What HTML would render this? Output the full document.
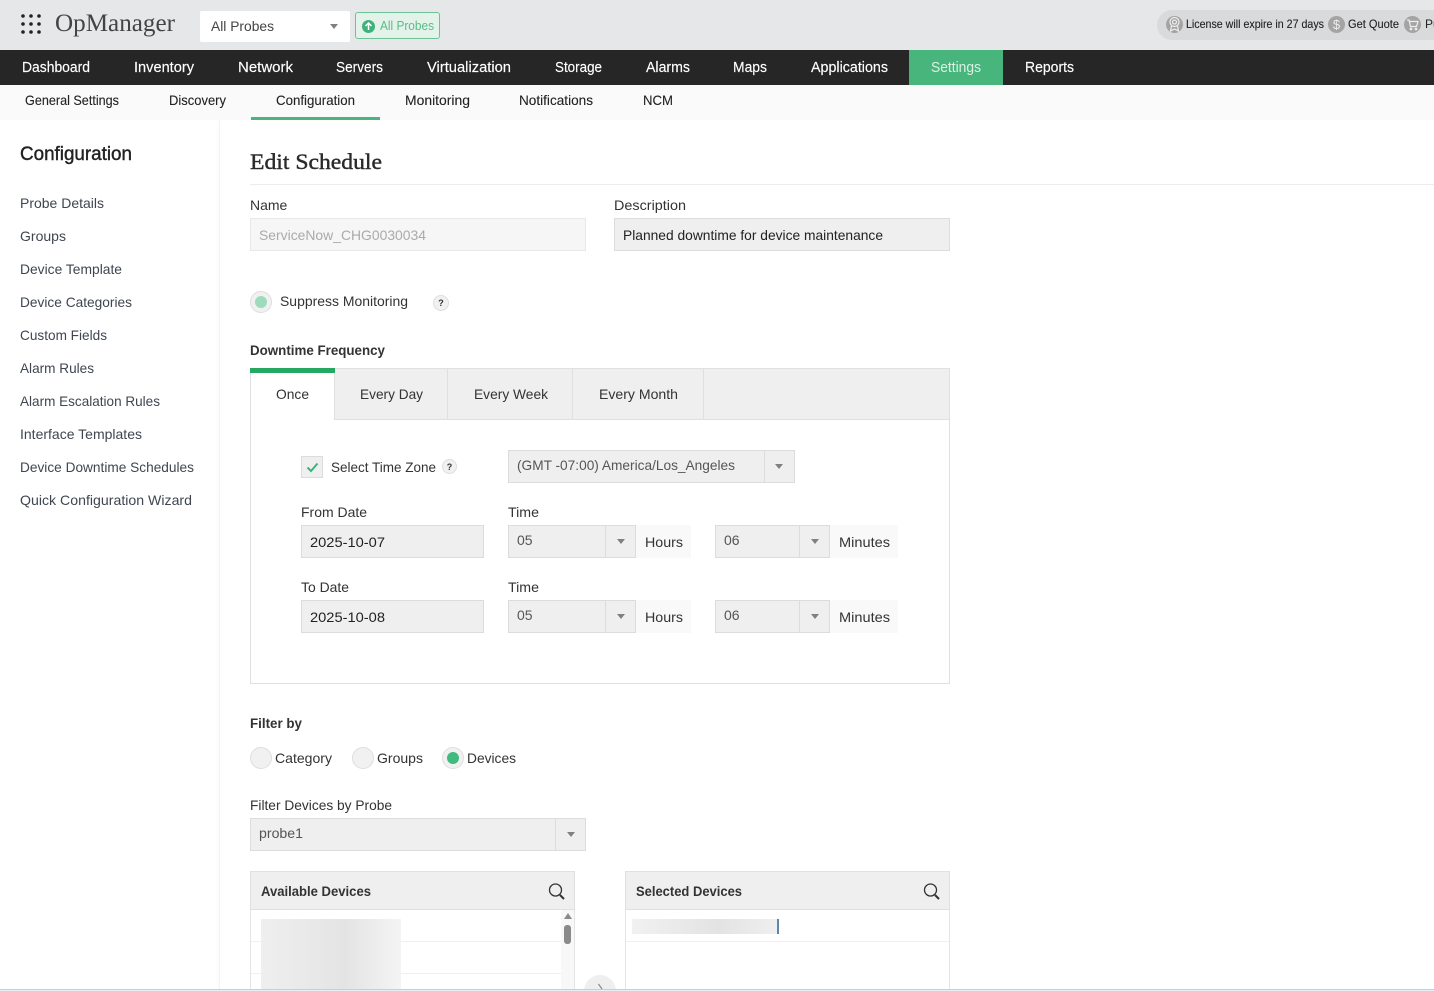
<!DOCTYPE html>
<html lang="en"><head><meta charset="utf-8"><title>OpManager - Edit Schedule</title>
<style>
html,body{margin:0;padding:0;background:#fff;width:1434px;height:991px;overflow:hidden}
#p{position:relative;width:1434px;height:991px;overflow:hidden;background:#fff}
.b{position:absolute;box-sizing:border-box}
.f{background:#efefef;border:1px solid #dcdcdc}
.sep{position:absolute;top:0;bottom:0;width:1px;background:#dcdcdc}
.ar{position:absolute;width:0;height:0;border-left:4px solid transparent;border-right:4px solid transparent;border-top:5px solid #808080}
.u{background:#f9f9f9}
.r{border-radius:50%;background:#f1f1f1;border:1px solid #dedede}
svg.o{position:absolute;left:0;top:0}
text{font-family:"Liberation Sans",sans-serif;font-size:14px;fill:#333}
.n{fill:#fff;font-size:14.5px;stroke:#fff;stroke-width:.15px}
.s{fill:#222;font-size:14px;stroke:#222;stroke-width:.1px}
.m{fill:#3f4650}
.h{font-weight:bold;fill:#333}
.d{fill:#555}
</style></head><body><div id="p">
<div class="b" style="left:0;top:0;width:1434px;height:50px;background:#e6e7e9"></div>
<div class="b" style="left:200px;top:11px;width:150px;height:31px;background:#fff;border-radius:2px"></div>
<div class="ar" style="left:330px;top:24px"></div>
<div class="b" style="left:355px;top:12px;width:85px;height:27px;background:#e4f3ea;border:1px solid #6cc496;border-radius:3px"></div>
<div class="b" style="left:362px;top:20px;width:13px;height:13px;border-radius:50%;background:#3fb27a"></div>
<div class="b" style="left:1157px;top:10px;width:290px;height:30px;background:#d9dadb;border-radius:15px"></div>
<div class="b" style="left:1166px;top:16px;width:17px;height:17px;border-radius:50%;background:#a4a4a4"></div>
<div class="b" style="left:1328px;top:16px;width:17px;height:17px;border-radius:50%;background:#a4a4a4"></div>
<div class="b" style="left:1404px;top:16px;width:17px;height:17px;border-radius:50%;background:#a4a4a4"></div>
<div class="b" style="left:0;top:50px;width:1434px;height:35px;background:#262626"></div>
<div class="b" style="left:909px;top:50px;width:94px;height:35px;background:#48b57c"></div>
<div class="b" style="left:0;top:85px;width:1434px;height:35px;background:#fafafa"></div>
<div class="b" style="left:251px;top:117px;width:129px;height:3px;background:#48b57c"></div>
<div class="b" style="left:219px;top:120px;width:1px;height:871px;background:#f3f3f3;box-shadow:-1px 0 3px rgba(0,0,0,.05)"></div>
<div class="b" style="left:250px;top:184px;width:1184px;height:1px;background:#ececec"></div>

<div class="b" style="left:250px;top:218px;width:336px;height:33px;background:#f6f6f6;border:1px solid #e8e8e8"></div>
<div class="b f" style="left:614px;top:218px;width:336px;height:33px"></div>
<div class="b r" style="left:250px;top:291px;width:22px;height:22px"></div>
<div class="b" style="left:255px;top:296px;width:12px;height:12px;border-radius:50%;background:#9cdcbc"></div>
<div class="b r" style="left:433px;top:295px;width:16px;height:16px"></div>

<div class="b" style="left:250px;top:368px;width:700px;height:316px;border:1px solid #e0e0e0"></div>
<div class="b" style="left:250px;top:368px;width:700px;height:52px;background:#efefef;border:1px solid #e0e0e0"></div>
<div class="b" style="left:251px;top:369px;width:84px;height:52px;background:#fff"></div>
<div class="b" style="left:250px;top:368px;width:85px;height:5px;background:#27a862"></div>
<div class="b" style="left:334px;top:373px;width:1px;height:47px;background:#e0e0e0"></div>
<div class="b" style="left:447px;top:369px;width:1px;height:50px;background:#e0e0e0"></div>
<div class="b" style="left:572px;top:369px;width:1px;height:50px;background:#e0e0e0"></div>
<div class="b" style="left:703px;top:369px;width:1px;height:50px;background:#e0e0e0"></div>

<div class="b f" style="left:301px;top:456px;width:22px;height:22px"></div>
<svg class="b" style="left:301px;top:456px" width="22" height="22"><path d="M6.500 11.500l3.500 3.500 6.500-7.500" fill="none" stroke="#3fb27a" stroke-width="2"/></svg>
<div class="b r" style="left:442px;top:459px;width:15px;height:15px"></div>
<div class="b f" style="left:508px;top:450px;width:287px;height:33px"><div class="sep" style="left:255px"></div></div>
<div class="ar" style="left:775px;top:464px"></div>

<div class="b f" style="left:301px;top:525px;width:183px;height:33px"></div>
<div class="b f" style="left:508px;top:525px;width:128px;height:33px"><div class="sep" style="left:96px"></div></div><div class="ar" style="left:617px;top:539px"></div>
<div class="b u" style="left:636px;top:525px;width:55px;height:33px"></div>
<div class="b f" style="left:715px;top:525px;width:115px;height:33px"><div class="sep" style="left:83px"></div></div><div class="ar" style="left:811px;top:539px"></div>
<div class="b u" style="left:830px;top:525px;width:68px;height:33px"></div>

<div class="b f" style="left:301px;top:600px;width:183px;height:33px"></div>
<div class="b f" style="left:508px;top:600px;width:128px;height:33px"><div class="sep" style="left:96px"></div></div><div class="ar" style="left:617px;top:614px"></div>
<div class="b u" style="left:636px;top:600px;width:55px;height:33px"></div>
<div class="b f" style="left:715px;top:600px;width:115px;height:33px"><div class="sep" style="left:83px"></div></div><div class="ar" style="left:811px;top:614px"></div>
<div class="b u" style="left:830px;top:600px;width:68px;height:33px"></div>

<div class="b r" style="left:250px;top:747px;width:22px;height:22px"></div>
<div class="b r" style="left:352px;top:747px;width:22px;height:22px"></div>
<div class="b r" style="left:442px;top:747px;width:22px;height:22px"></div>
<div class="b" style="left:447px;top:752px;width:12px;height:12px;border-radius:50%;background:#3fbb7e"></div>

<div class="b f" style="left:250px;top:818px;width:336px;height:33px"><div class="sep" style="left:304px"></div></div>
<div class="ar" style="left:567px;top:832px"></div>

<div class="b" style="left:250px;top:871px;width:325px;height:125px;border:1px solid #e4e4e4"></div>
<div class="b f" style="left:250px;top:871px;width:325px;height:39px;border-color:#e0e0e0"></div>
<div class="b" style="left:251px;top:941px;width:310px;height:1px;background:#f0f0f0"></div>
<div class="b" style="left:251px;top:973px;width:310px;height:1px;background:#f0f0f0"></div>
<div class="b" style="left:561px;top:910px;width:13px;height:80px;background:#f8f8f8"></div>
<div class="ar" style="left:563.500px;top:913px;border-top:0;border-bottom:6px solid #8a8a8a"></div>
<div class="b" style="left:564px;top:925px;width:7px;height:19px;border-radius:3px;background:#8a8a8a"></div>
<div class="b" style="left:261px;top:919px;width:140px;height:72px;background:linear-gradient(90deg,#efefef,#e4e4e4 60%,#f4f4f4)"></div>

<div class="b" style="left:625px;top:871px;width:325px;height:125px;border:1px solid #e4e4e4"></div>
<div class="b f" style="left:625px;top:871px;width:325px;height:39px;border-color:#e0e0e0"></div>
<div class="b" style="left:626px;top:941px;width:323px;height:1px;background:#f0f0f0"></div>
<div class="b" style="left:632px;top:919px;width:145px;height:15px;background:linear-gradient(90deg,#f1f1f1,#e3e3e3 60%,#efefef)"></div>
<div class="b" style="left:777px;top:919px;width:2px;height:15px;background:#5f86ad"></div>
<div class="b" style="left:584px;top:975px;width:32px;height:32px;border-radius:50%;background:#efefef"></div>
<div class="b" style="left:0;top:989px;width:1434px;height:2px;background:#e8eef6;border-top:1px solid #c5cedb"></div>

<svg class="o" width="1434" height="991">
<g fill="#222"><circle cx="23" cy="16" r="1.800"/><circle cx="31" cy="16" r="1.800"/><circle cx="39" cy="16" r="1.800"/><circle cx="23" cy="24" r="1.800"/><circle cx="31" cy="24" r="1.800"/><circle cx="39" cy="24" r="1.800"/><circle cx="23" cy="32" r="1.800"/><circle cx="31" cy="32" r="1.800"/><circle cx="39" cy="32" r="1.800"/></g>
<path d="M368.500 30v-7M365.500 26l3-3 3 3" fill="none" stroke="#fff" stroke-width="1.500"/>
<g fill="none" stroke="#eee" stroke-width="1.200"><circle cx="1174.500" cy="22" r="4.500"/><circle cx="1174.500" cy="22" r="2"/><path d="M1171.500 26l-1 5 4-2 4 2-1-5"/></g>
<g fill="none" stroke="#eee" stroke-width="1.200"><path d="M1407 20h2l1.500 6.500h6l1.500-5h-8.500"/><circle cx="1411" cy="29" r=".8"/><circle cx="1416" cy="29" r=".8"/></g>
<path d="M598.500 984l3.500 5" fill="none" stroke="#8a8a8a" stroke-width="1.200"/>
<g fill="none" stroke="#333" stroke-width="1.300"><circle cx="555.500" cy="890" r="6"/><path d="M560 895l4 4" stroke-width="2"/><circle cx="930.500" cy="890" r="6"/><path d="M935 895l4 4" stroke-width="2"/></g>
<text x="55" y="31" textLength="120" lengthAdjust="spacingAndGlyphs" style="font-family:'Liberation Serif',serif;font-size:25px;fill:#444">OpManager</text>
<text x="211" y="31" textLength="63" lengthAdjust="spacingAndGlyphs" style="fill:#444">All Probes</text>
<text x="380" y="30" textLength="54" lengthAdjust="spacingAndGlyphs" style="fill:#58bd88;font-size:13px">All Probes</text>
<text x="1186" y="28" textLength="138" lengthAdjust="spacingAndGlyphs" style="font-size:12px;fill:#222;stroke:#222;stroke-width:.12px">License will expire in 27 days</text>
<text x="1348" y="28" textLength="51" lengthAdjust="spacingAndGlyphs" style="font-size:12px;fill:#222;stroke:#222;stroke-width:.12px">Get Quote</text>
<text x="1425" y="28" style="font-size:12px;fill:#222">Purchase</text>
<text x="1336.500" y="29" text-anchor="middle" style="font-size:13px;fill:#eee">$</text>
<text class="n" x="22" y="72" textLength="68" lengthAdjust="spacingAndGlyphs">Dashboard</text>
<text class="n" x="134" y="72" textLength="60" lengthAdjust="spacingAndGlyphs">Inventory</text>
<text class="n" x="238" y="72" textLength="55" lengthAdjust="spacingAndGlyphs">Network</text>
<text class="n" x="336" y="72" textLength="47" lengthAdjust="spacingAndGlyphs">Servers</text>
<text class="n" x="427" y="72" textLength="84" lengthAdjust="spacingAndGlyphs">Virtualization</text>
<text class="n" x="555" y="72" textLength="47" lengthAdjust="spacingAndGlyphs">Storage</text>
<text class="n" x="646" y="72" textLength="44" lengthAdjust="spacingAndGlyphs">Alarms</text>
<text class="n" x="733" y="72" textLength="34" lengthAdjust="spacingAndGlyphs">Maps</text>
<text class="n" x="811" y="72" textLength="77" lengthAdjust="spacingAndGlyphs">Applications</text>
<text class="n" x="931" y="72" textLength="50" lengthAdjust="spacingAndGlyphs" style="fill:#d9f2e4;stroke:none">Settings</text>
<text class="n" x="1025" y="72" textLength="49" lengthAdjust="spacingAndGlyphs">Reports</text>
<text class="s" x="25" y="105" textLength="94" lengthAdjust="spacingAndGlyphs">General Settings</text>
<text class="s" x="169" y="105" textLength="57" lengthAdjust="spacingAndGlyphs">Discovery</text>
<text class="s" x="276" y="105" textLength="79" lengthAdjust="spacingAndGlyphs">Configuration</text>
<text class="s" x="405" y="105" textLength="65" lengthAdjust="spacingAndGlyphs">Monitoring</text>
<text class="s" x="519" y="105" textLength="74" lengthAdjust="spacingAndGlyphs">Notifications</text>
<text class="s" x="643" y="105" textLength="30" lengthAdjust="spacingAndGlyphs">NCM</text>
<text x="20" y="160" textLength="112" lengthAdjust="spacingAndGlyphs" style="font-size:19px;fill:#222;stroke:#222;stroke-width:.4px">Configuration</text>
<text class="m" x="20" y="208" textLength="84" lengthAdjust="spacingAndGlyphs">Probe Details</text>
<text class="m" x="20" y="241" textLength="46" lengthAdjust="spacingAndGlyphs">Groups</text>
<text class="m" x="20" y="274" textLength="102" lengthAdjust="spacingAndGlyphs">Device Template</text>
<text class="m" x="20" y="307" textLength="112" lengthAdjust="spacingAndGlyphs">Device Categories</text>
<text class="m" x="20" y="340" textLength="87" lengthAdjust="spacingAndGlyphs">Custom Fields</text>
<text class="m" x="20" y="373" textLength="74" lengthAdjust="spacingAndGlyphs">Alarm Rules</text>
<text class="m" x="20" y="406" textLength="140" lengthAdjust="spacingAndGlyphs">Alarm Escalation Rules</text>
<text class="m" x="20" y="439" textLength="122" lengthAdjust="spacingAndGlyphs">Interface Templates</text>
<text class="m" x="20" y="472" textLength="174" lengthAdjust="spacingAndGlyphs">Device Downtime Schedules</text>
<text class="m" x="20" y="505" textLength="172" lengthAdjust="spacingAndGlyphs">Quick Configuration Wizard</text>
<text x="250" y="169" textLength="132" lengthAdjust="spacingAndGlyphs" style="font-family:'Liberation Serif',serif;font-size:22px;fill:#2a2a2a;stroke:#2a2a2a;stroke-width:.4px">Edit Schedule</text>
<text x="250" y="210">Name</text>
<text x="614" y="210" textLength="72" lengthAdjust="spacingAndGlyphs">Description</text>
<text x="259" y="240" textLength="167" lengthAdjust="spacingAndGlyphs" style="fill:#aaa">ServiceNow_CHG0030034</text>
<text x="623" y="240" textLength="260" lengthAdjust="spacingAndGlyphs" style="fill:#222">Planned downtime for device maintenance</text>
<text x="280" y="306" textLength="128" lengthAdjust="spacingAndGlyphs">Suppress Monitoring</text>
<text x="441" y="306" text-anchor="middle" style="font-size:9px;font-weight:bold">?</text>
<text class="h" x="250" y="355" textLength="135" lengthAdjust="spacingAndGlyphs">Downtime Frequency</text>
<text x="276" y="399" textLength="33" lengthAdjust="spacingAndGlyphs">Once</text>
<text x="360" y="399" textLength="63" lengthAdjust="spacingAndGlyphs">Every Day</text>
<text x="474" y="399" textLength="74" lengthAdjust="spacingAndGlyphs">Every Week</text>
<text x="599" y="399" textLength="79" lengthAdjust="spacingAndGlyphs">Every Month</text>
<text x="331" y="472" textLength="105" lengthAdjust="spacingAndGlyphs">Select Time Zone</text>
<text x="449.500" y="470" text-anchor="middle" style="font-size:9px;font-weight:bold">?</text>
<text class="d" x="517" y="470" textLength="218" lengthAdjust="spacingAndGlyphs">(GMT -07:00) America/Los_Angeles</text>
<text x="301" y="517" textLength="66" lengthAdjust="spacingAndGlyphs">From Date</text>
<text x="508" y="517" textLength="31" lengthAdjust="spacingAndGlyphs">Time</text>
<text x="310" y="547" textLength="75" lengthAdjust="spacingAndGlyphs" style="fill:#222">2025-10-07</text>
<text class="d" x="517" y="545">05</text>
<text x="645" y="547" textLength="38" lengthAdjust="spacingAndGlyphs">Hours</text>
<text class="d" x="724" y="545">06</text>
<text x="839" y="547" textLength="51" lengthAdjust="spacingAndGlyphs">Minutes</text>
<text x="301" y="592" textLength="48" lengthAdjust="spacingAndGlyphs">To Date</text>
<text x="508" y="592" textLength="31" lengthAdjust="spacingAndGlyphs">Time</text>
<text x="310" y="622" textLength="75" lengthAdjust="spacingAndGlyphs" style="fill:#222">2025-10-08</text>
<text class="d" x="517" y="620">05</text>
<text x="645" y="622" textLength="38" lengthAdjust="spacingAndGlyphs">Hours</text>
<text class="d" x="724" y="620">06</text>
<text x="839" y="622" textLength="51" lengthAdjust="spacingAndGlyphs">Minutes</text>
<text class="h" x="250" y="728" textLength="52" lengthAdjust="spacingAndGlyphs">Filter by</text>
<text x="275" y="763" textLength="57" lengthAdjust="spacingAndGlyphs">Category</text>
<text x="377" y="763" textLength="46" lengthAdjust="spacingAndGlyphs">Groups</text>
<text x="467" y="763" textLength="49" lengthAdjust="spacingAndGlyphs">Devices</text>
<text x="250" y="810" textLength="142" lengthAdjust="spacingAndGlyphs">Filter Devices by Probe</text>
<text class="d" x="259" y="838" textLength="44" lengthAdjust="spacingAndGlyphs">probe1</text>
<text class="h" x="261" y="896" textLength="110" lengthAdjust="spacingAndGlyphs">Available Devices</text>
<text class="h" x="636" y="896" textLength="106" lengthAdjust="spacingAndGlyphs">Selected Devices</text>
</svg>
</div></body></html>
